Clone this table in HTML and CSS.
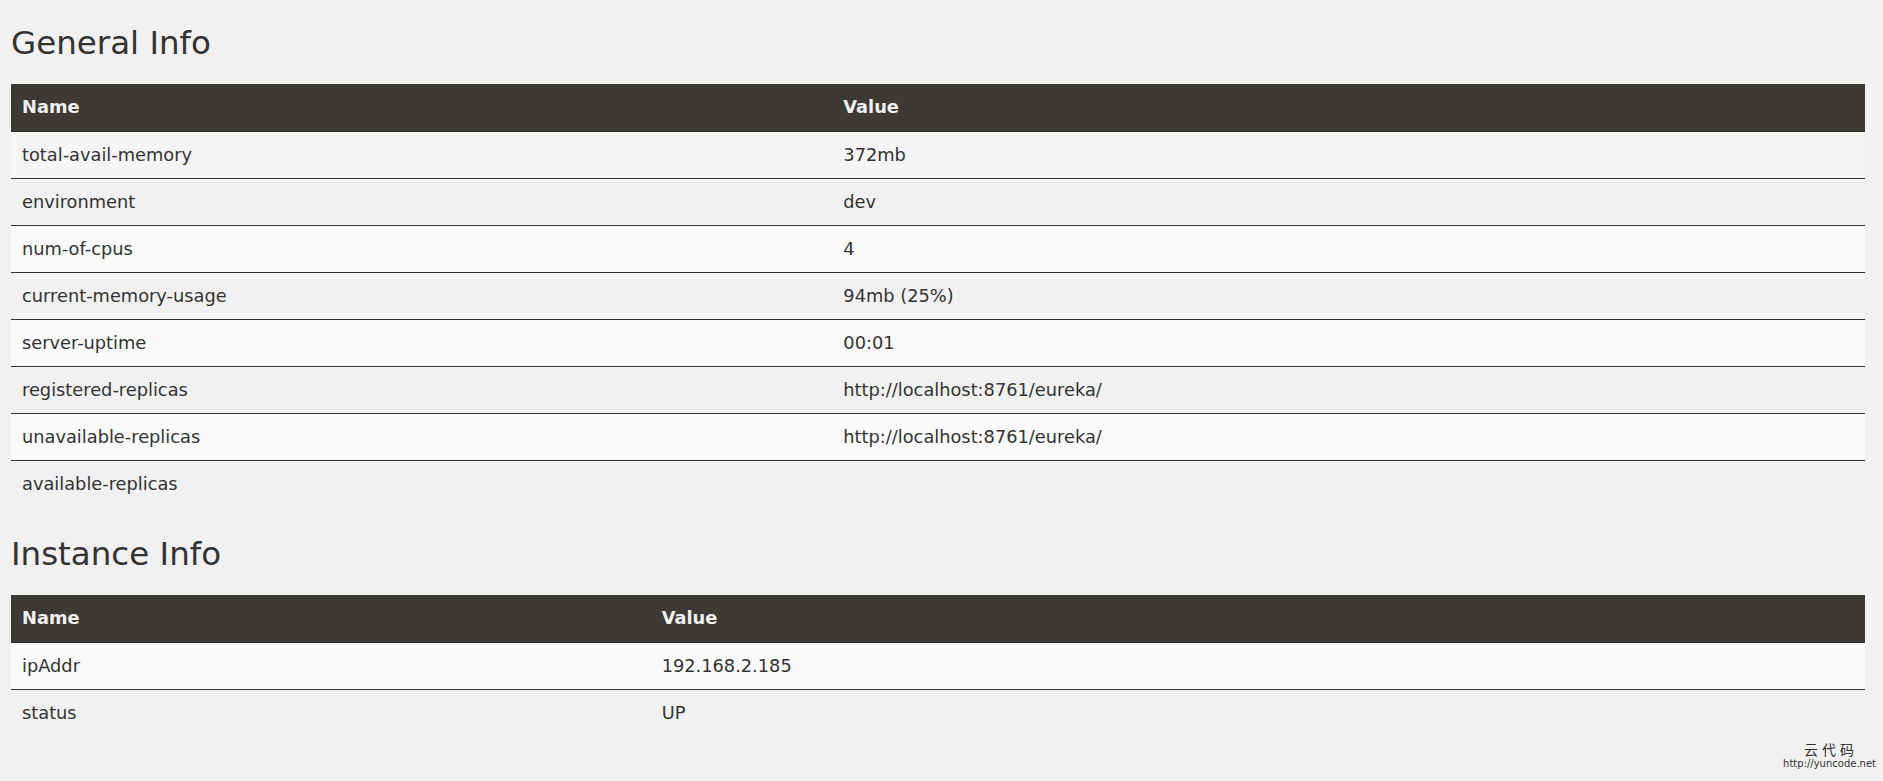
FILE: index.html
```html
<!DOCTYPE html>
<html>
<head>
<meta charset="utf-8">
<link rel="stylesheet" href="styles.css">
</head>
<body>
<div class="page">
  <h1 class="title">General Info</h1>
  <table class="info general">
    <thead>
      <tr><th class="name-col">Name</th><th>Value</th></tr>
    </thead>
    <tbody>
      <tr class="first"><td>total-avail-memory</td><td>372mb</td></tr>
      <tr><td>environment</td><td>dev</td></tr>
      <tr><td>num-of-cpus</td><td>4</td></tr>
      <tr><td>current-memory-usage</td><td>94mb (25%)</td></tr>
      <tr><td>server-uptime</td><td>00:01</td></tr>
      <tr><td>registered-replicas</td><td>http://localhost:8761/eureka/</td></tr>
      <tr><td>unavailable-replicas</td><td>http://localhost:8761/eureka/</td></tr>
      <tr class="last"><td>available-replicas</td><td></td></tr>
    </tbody>
  </table>
  <h1 class="title second">Instance Info</h1>
  <table class="info instance">
    <thead>
      <tr><th class="name-col">Name</th><th>Value</th></tr>
    </thead>
    <tbody>
      <tr><td>ipAddr</td><td>192.168.2.185</td></tr>
      <tr class="last"><td>status</td><td>UP</td></tr>
    </tbody>
  </table>
</div>
<div class="watermark">
  <div class="wm-cn">云代码</div>
  <div class="wm-url">http://yuncode.net</div>
</div>
</body>
</html>
```

FILE: styles.css
```css
html, body {
  margin: 0;
  padding: 0;
  background: #f1f1f1;
}
body {
  font-family: "DejaVu Sans", "Noto Sans", sans-serif;
  color: #333;
  font-size: 17.8px;
}
.page {
  width: 1854px;
  margin-left: 11px;
  padding-top: 1px;
}
.title {
  font-family: "DejaVu Sans", sans-serif;
  font-weight: normal;
  font-size: 32.5px;
  line-height: 40px;
  margin: 22px 0 21px 0;
  color: #333;
}
.title.second {
  margin-top: 27px;
}
.info {
  width: 100%;
  border-collapse: collapse;
  border-spacing: 0;
}
.info th {
  background: #3d3a35;
  color: #f1f1f1;
  text-align: left;
  font-weight: bold;
  padding: 11px 11px 12px 11px;
  line-height: 24px;
  border-bottom: 1px solid #2f2c28;
}
.info td {
  padding: 11px 11px;
  line-height: 24px;
  border-bottom: 1px solid #333;
}
.info tbody tr:nth-child(odd) td {
  background: #fafafa;
}
.info tbody tr.first td {
  background: #f5f5f5;
}
.info tbody tr.last td {
  border-bottom: none;
  background: transparent;
}
.general .name-col {
  width: 44.3%;
}
.instance .name-col {
  width: 34.5%;
}
.watermark {
  position: absolute;
  right: 7px;
  top: 740px;
  text-align: right;
  color: #333;
}
.wm-cn {
  font-family: "Noto Sans CJK SC", sans-serif;
  font-size: 14px;
  line-height: 18px;
  letter-spacing: 4px;
  padding-right: 18px;
}
.wm-url {
  font-family: "DejaVu Sans", sans-serif;
  font-size: 10px;
  line-height: 12px;
}
```
